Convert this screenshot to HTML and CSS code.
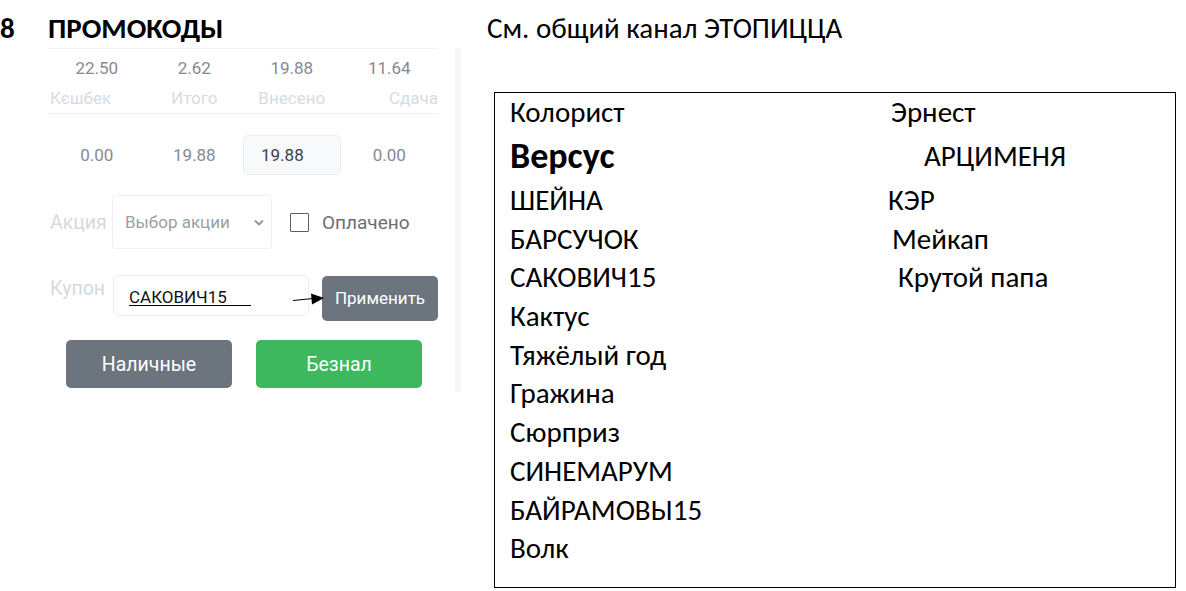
FILE: index.html
```html
<!DOCTYPE html>
<html lang="ru">
<head>
<meta charset="utf-8">
<title>Промокоды</title>
<link rel="stylesheet" href="styles.css">
</head>
<body>
<div class="page">
  <div class="left">
    <h1 class="heading"><span class="num">8</span><span class="htext">ПРОМОКОДЫ</span></h1>
    <div class="panel">
      <div class="summary">
        <div class="grid">
          <div class="val">22.50</div>
          <div class="val">2.62</div>
          <div class="val">19.88</div>
          <div class="val">11.64</div>
          <div class="lbl l-left">Кєшбек</div>
          <div class="lbl">Итого</div>
          <div class="lbl">Внесено</div>
          <div class="lbl l-right">Сдача</div>
        </div>
      </div>
      <div class="grid row2">
        <div class="val">0.00</div>
        <div class="val">19.88</div>
        <div class="inbox">19.88</div>
        <div class="val">0.00</div>
      </div>
      <div class="action-row">
        <span class="flabel">Акция</span>
        <div class="select">
          <span>Выбор акции</span>
          <svg class="chev" width="10" height="7" viewBox="0 0 10 7"><path d="M1 1.5 L5 5.5 L9 1.5" fill="none" stroke="#8d9399" stroke-width="1.8"/></svg>
        </div>
        <span class="check"></span>
        <span class="paid">Оплачено</span>
      </div>
      <div class="coupon-row">
        <span class="flabel coupon-label">Купон</span>
        <div class="coupon-input"><span class="code">САКОВИЧ15</span></div>
        <button class="btn btn-apply">Применить</button>
        <svg class="arrow" width="32" height="14" viewBox="0 0 32 14"><path d="M0 8.5 L20 6.5" stroke="#000" stroke-width="1.2"/><path d="M18 1.5 L31 6 L19 12.5 Z" fill="#000"/></svg>
      </div>
      <div class="pay-row">
        <button class="btn btn-cash">Наличные</button>
        <button class="btn btn-card">Безнал</button>
      </div>
    </div>
  </div>
  <div class="right">
    <p class="note">См. общий канал ЭТОПИЦЦА</p>
    <div class="box">
      <ul class="col col-a">
        <li>Колорист</li>
        <li class="big">Версус</li>
        <li>ШЕЙНА</li>
        <li>БАРСУЧОК</li>
        <li>САКОВИЧ15</li>
        <li>Кактус</li>
        <li>Тяжёлый год</li>
        <li>Гражина</li>
        <li>Сюрприз</li>
        <li>СИНЕМАРУМ</li>
        <li>БАЙРАМОВЫ15</li>
        <li>Волк</li>
      </ul>
      <ul class="col col-b">
        <li class="in3">Эрнест</li>
        <li class="big-row in36">АРЦИМЕНЯ</li>
        <li>КЭР</li>
        <li class="in4">Мейкап</li>
        <li class="in10">Крутой папа</li>
      </ul>
    </div>
  </div>
</div>
</body>
</html>
```

FILE: styles.css
```css
html, body {
  margin: 0;
  padding: 0;
  background: #fff;
}
body {
  width: 1186px;
  height: 591px;
  overflow: hidden;
  font-family: Carlito, "Liberation Sans", sans-serif;
  color: #000;
}
.page {
  display: flex;
}
.left {
  width: 470px;
  flex: none;
}
.heading {
  margin: 0;
  padding-top: 11px;
  height: 34px;
  font-size: 29px;
  font-weight: bold;
  line-height: 34px;
  display: flex;
}
.num {
  width: 48px;
}
.panel {
  margin-left: 48px;
  width: 390px;
  padding-right: 17px;
  border-right: 6px solid #f4f7fa;
  padding-bottom: 4px;
  font-family: Roboto, sans-serif;
  font-size: 17px;
}
.summary {
  border-top: 1px solid #eef0f3;
  border-bottom: 1px solid #eef0f3;
  margin-top: 3px;
  padding: 8px 0 4px;
}
.grid {
  display: grid;
  grid-template-columns: repeat(4, 1fr);
  align-items: center;
}
.val {
  text-align: center;
  color: #858a91;
  line-height: 22px;
}
.lbl {
  text-align: center;
  color: #d5dce4;
  line-height: 22px;
  margin-top: 8px;
}
.l-left { text-align: left; padding-left: 2px; }
.l-right { text-align: right; }
.row2 {
  margin-top: 21px;
}
.inbox {
  height: 38px;
  border: 1px solid #eceef1;
  background: #f8f9fa;
  border-radius: 5px;
  line-height: 38px;
  padding-left: 17px;
  color: #3c4046;
}
.action-row {
  display: flex;
  align-items: center;
  margin-top: 20px;
  height: 54px;
}
.flabel {
  color: #d3dae2;
  padding-left: 2px;
  width: 62px;
  flex: none;
  font-size: 19.5px;
}
.select {
  height: 52px;
  border: 1px solid #eef0f2;
  border-radius: 4px;
  display: flex;
  align-items: center;
  justify-content: space-between;
  padding: 0 7px 0 12px;
  box-sizing: content-box;
  width: 139px;
  color: #9aa0a6;
  font-size: 17px;
}
.chev { margin-top: 1px; }
.check {
  width: 17px;
  height: 17px;
  border: 1px solid #5a5d61;
  border-radius: 1px;
  margin-left: 18px;
  flex: none;
}
.paid {
  margin-left: 13px;
  color: #6b6f74;
  font-size: 19px;
}
.coupon-row {
  position: relative;
  display: flex;
  align-items: center;
  margin-top: 26px;
  height: 46px;
}
.coupon-label {
  width: 63px;
  align-self: flex-start;
  margin-top: 2px;
  line-height: 24px;
}
.coupon-input {
  width: 179px;
  height: 39px;
  border: 1px solid #eceef1;
  border-radius: 6px;
  padding-left: 15px;
  display: flex;
  align-items: center;
  margin-top: -5px;
}
.code {
  color: #111;
  font-size: 17px;
  border-bottom: 1px solid #000;
  padding-right: 24px;
  line-height: 16px;
  margin-top: 3px;
}
.btn {
  border: 0;
  color: #fff;
  font-family: Roboto, sans-serif;
  cursor: pointer;
  padding: 0;
}
.btn-apply {
  margin-left: 13px;
  width: 116px;
  height: 45px;
  border-radius: 5px;
  background: #6c757d;
  font-size: 17px;
}
.arrow {
  position: absolute;
  left: 245px;
  top: 17px;
}
.pay-row {
  display: flex;
  gap: 24px;
  margin-top: 19px;
  padding-left: 18px;
}
.btn-cash, .btn-card {
  width: 166px;
  height: 48px;
  border-radius: 5px;
  font-size: 19.5px;
}
.btn-cash { background: #6c757d; }
.btn-card { background: #3db85e; }

.right {
  flex: 1;
}
.note {
  margin: 0;
  padding-top: 13px;
  padding-left: 17px;
  font-size: 29px;
  line-height: 30px;
}
.box {
  margin-top: 49px;
  margin-left: 24px;
  width: 680px;
  height: 494px;
  border: 1px solid #000;
  display: flex;
  font-size: 29px;
}
.col {
  list-style: none;
  margin: 0;
  padding: 0;
}
.col li {
  height: 38.7px;
  line-height: 38.7px;
}
.col-a {
  padding-left: 15px;
  width: 378px;
}
.col-b {
  padding-left: 0;
}
.col li:first-child {
  height: 38px;
  line-height: 38px;
}
.col .big, .col .big-row {
  height: 50px;
  line-height: 50px;
}
.col .big {
  font-size: 36px;
  font-weight: bold;
}
.in3 { padding-left: 3px; }
.in4 { padding-left: 4px; }
.in10 { padding-left: 10px; }
.in36 { padding-left: 36px; }
```
